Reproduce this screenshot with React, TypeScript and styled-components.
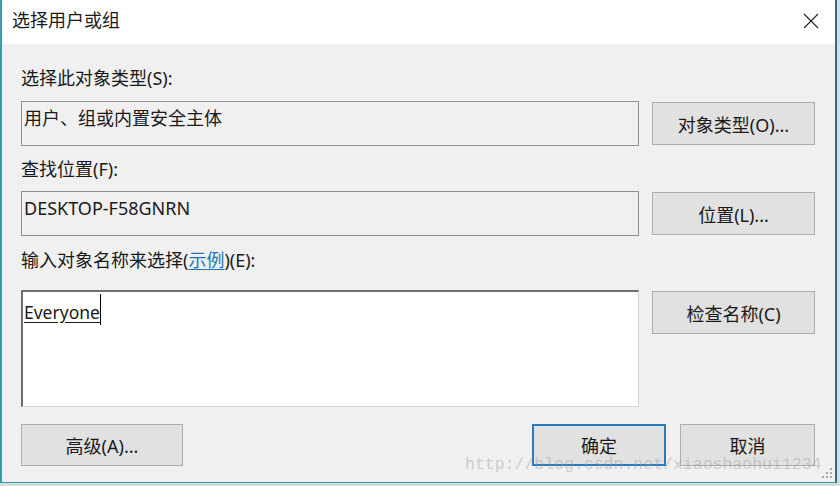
import React from "react";
import styled, { createGlobalStyle } from "styled-components";

const Global = createGlobalStyle`
  html, body { margin: 0; padding: 0; background: #d6dadd; }
  body { width: 840px; height: 486px; overflow: hidden; }
  * { box-sizing: border-box; }
`;

const FONT = `"Noto Sans", "Noto Sans CJK SC", sans-serif`;

const Window = styled.div`
  position: relative;
  width: 837px;
  height: 483px;
  display: flex;
  flex-direction: column;
  background: #f0f0f0;
  border-left: 2px solid #3a9ca8;
  border-right: 2px solid #2b6f7e;
  border-bottom: 1px solid #3a9ca8;
  font-family: ${FONT};
  color: #1a1a1a;
`;

const TitleBar = styled.div`
  height: 44px;
  background: #ffffff;
  display: flex;
  align-items: center;
  justify-content: space-between;
  padding: 0 16px 0 10px;
  flex-shrink: 0;
`;

const Title = styled.div`
  font-size: 18px;
  line-height: 24px;
  margin-top: -4px;
`;

const Close = styled.div`
  width: 16px;
  height: 16px;
  display: flex;
  margin-top: -3px;
`;

const Body = styled.div`
  flex: 1;
  display: flex;
  flex-direction: column;
  padding: 22px 0 0 19px;
  font-size: 18px;
`;

const Label = styled.div<{ $gap: number }>`
  height: 24px;
  line-height: 24px;
  margin-bottom: ${(p) => p.$gap}px;
  white-space: nowrap;
`;

const Link = styled.span`
  color: #2376b8;
  text-decoration: underline;
  text-underline-offset: 2px;
`;

const Row = styled.div<{ $after: number }>`
  display: grid;
  grid-template-columns: 618px 163px;
  column-gap: 13px;
  align-items: start;
  margin-bottom: ${(p) => p.$after}px;
`;

const ReadField = styled.div`
  height: 45px;
  border: 1px solid #8f8f8f;
  background: #f0f0f0;
  padding: 4px 2px;
  line-height: 24px;
  white-space: nowrap;
`;

const EditField = styled.div`
  height: 117px;
  background: #ffffff;
  border-top: 2px solid #6e6e6e;
  border-left: 2px solid #6e6e6e;
  border-right: 1px solid #d4d4d4;
  border-bottom: 1px solid #d4d4d4;
  padding: 8px 1px;
  line-height: 24px;
  display: flex;
  align-items: flex-start;
`;

const Typed = styled.span`
  text-decoration: underline;
  text-underline-offset: 3px;
  font-size: 17.5px;
`;

const Caret = styled.span`
  display: inline-block;
  width: 1px;
  height: 31px;
  background: #000;
  margin-top: -6px;
`;

const Button = styled.div<{ $w?: number; $h?: number; $primary?: boolean; $top?: number }>`
  width: ${(p) => (p.$w ? `${p.$w}px` : "100%")};
  height: ${(p) => p.$h ?? 43}px;
  margin-top: ${(p) => p.$top ?? 0}px;
  background: #e1e1e1;
  border: ${(p) => (p.$primary ? "2px solid #2b7cbf" : "1px solid #adadad")};
  display: flex;
  align-items: center;
  justify-content: center;
  font-size: 18px;
  white-space: nowrap;
`;

const Footer = styled.div`
  display: flex;
  align-items: center;
  width: 794px;
`;

const Spacer = styled.div`
  flex: 1;
`;

const FooterRight = styled.div`
  display: flex;
  gap: 14px;
`;

const Watermark = styled.div`
  position: absolute;
  left: 463px;
  top: 455px;
  font-family: "Liberation Mono", monospace;
  font-size: 16.5px;
  color: rgba(150, 150, 150, 0.42);
  white-space: nowrap;
  pointer-events: none;
`;

const Grip = styled.svg`
  position: absolute;
  right: 2px;
  bottom: 3px;
`;

export default function App() {
  return (
    <>
      <Global />
      <Window>
        <TitleBar>
          <Title>选择用户或组</Title>
          <Close>
            <svg width="16" height="16" viewBox="0 0 16 16">
              <path d="M1 1 L15 15 M15 1 L1 15" stroke="#222" strokeWidth="1.1" />
            </svg>
          </Close>
        </TitleBar>
        <Body>
          <Label $gap={11}>选择此对象类型(S):</Label>
          <Row $after={11}>
            <ReadField>用户、组或内置安全主体</ReadField>
            <Button $top={1}>对象类型(O)...</Button>
          </Row>
          <Label $gap={10}>查找位置(F):</Label>
          <Row $after={12}>
            <ReadField>DESKTOP-F58GNRN</ReadField>
            <Button $top={1}>位置(L)...</Button>
          </Row>
          <Label $gap={18}>
            输入对象名称来选择(<Link>示例</Link>)(E):
          </Label>
          <Row $after={17}>
            <EditField>
              <Typed>Everyone</Typed>
              <Caret />
            </EditField>
            <Button $top={1}>检查名称(C)</Button>
          </Row>
          <Footer>
            <Button $w={162} $h={42}>高级(A)...</Button>
            <Spacer />
            <FooterRight>
              <Button $w={134} $h={42} $primary>确定</Button>
              <Button $w={135} $h={42}>取消</Button>
            </FooterRight>
          </Footer>
        </Body>
        <Watermark>http://blog.csdn.net/xiaoshaohui1234</Watermark>
        <Grip width="12" height="12" viewBox="0 0 12 12">
          {[
            [9, 1], [9, 5], [5, 5], [9, 9], [5, 9], [1, 9],
          ].map(([x, y], i) => (
            <rect key={i} x={x} y={y} width="2" height="2" fill="#a9a9a9" />
          ))}
        </Grip>
      </Window>
    </>
  );
}
